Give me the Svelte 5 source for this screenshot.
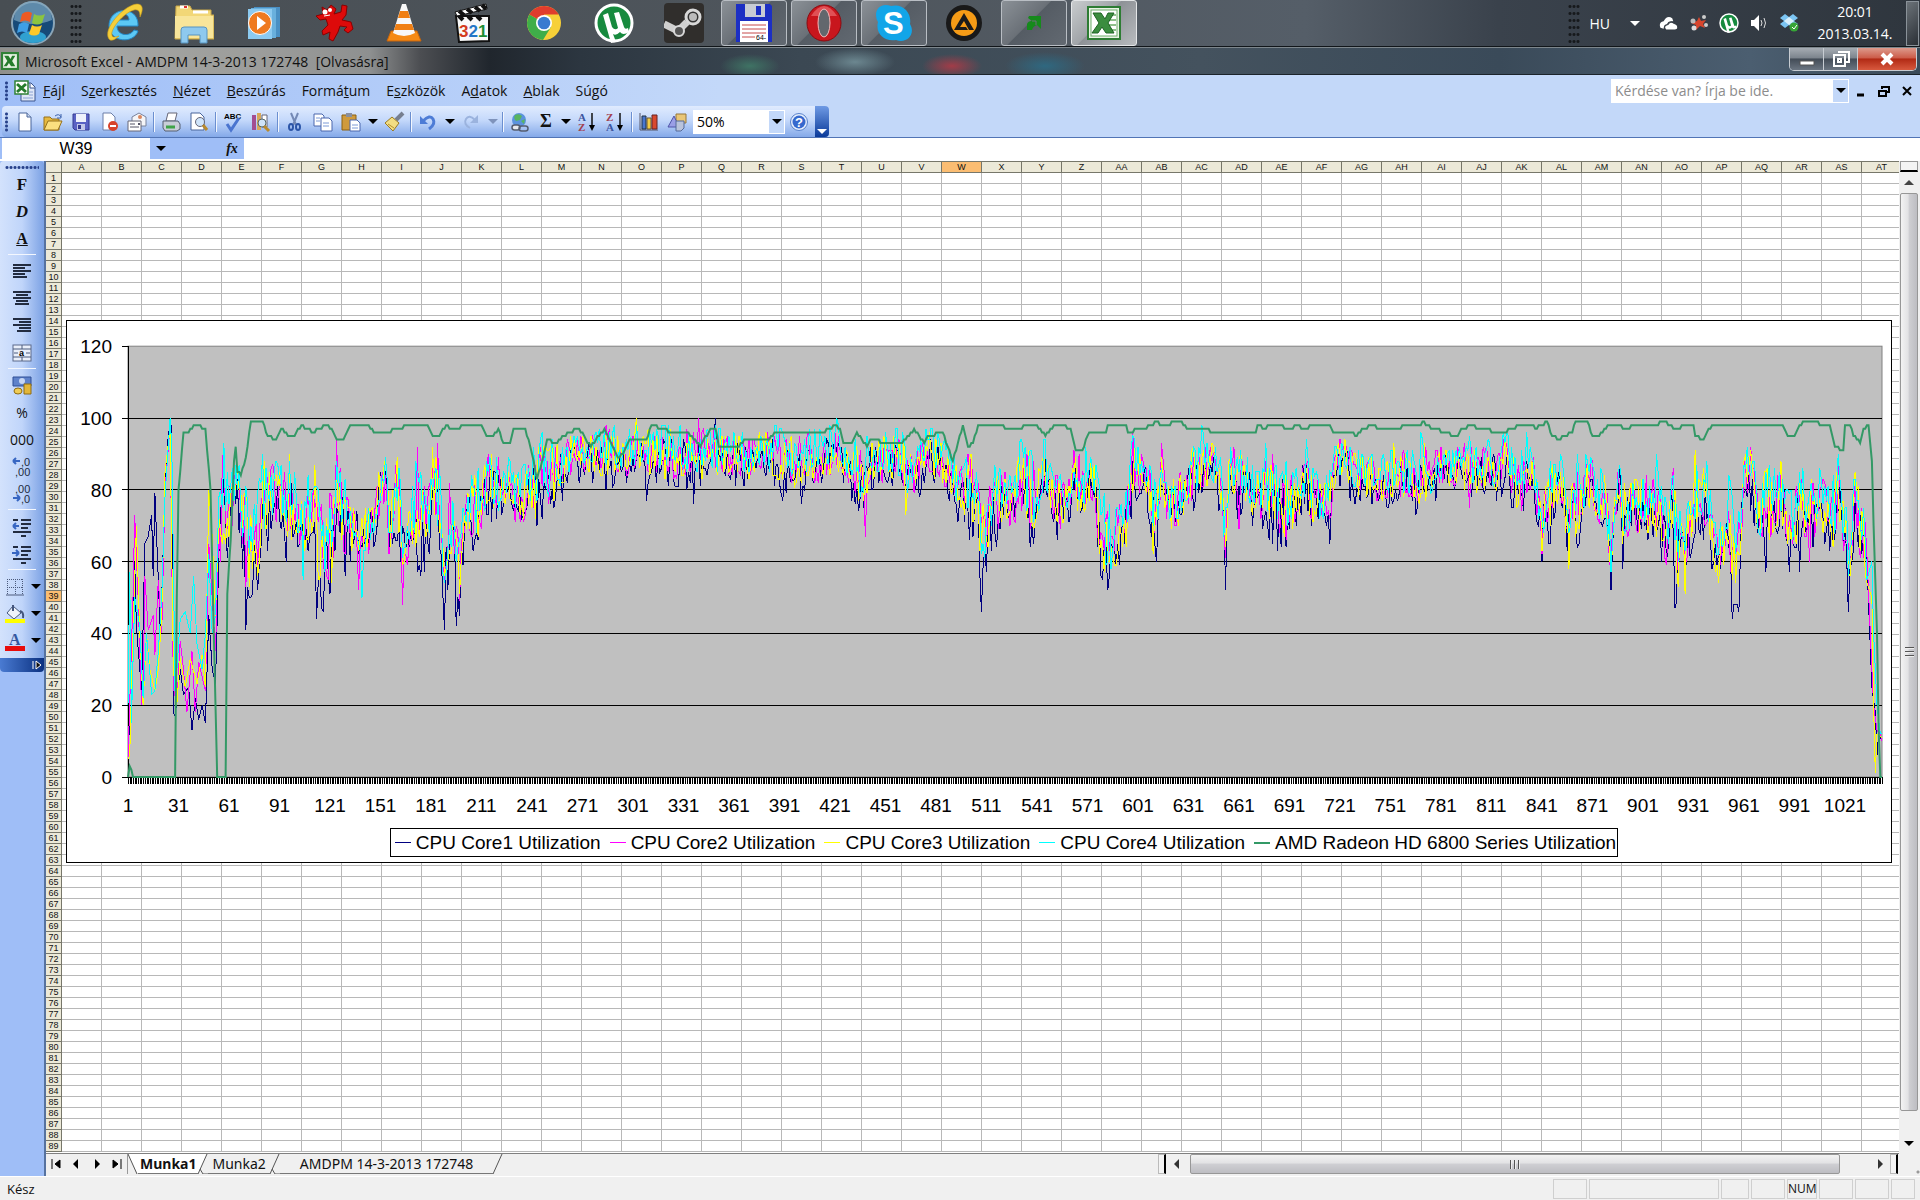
<script lang="ts">
  type Point = [number, number];

  const icons: Record<string, string> = {
    ie: '<svg viewBox="0 0 40 44" width="40" height="44"><path d="M34 25H13c0 10 13 11 17 4l4 1C30 43 6 42 5 25 5 5 35 4 34 25zM14 19h11c0-8-11-8-11 0z" fill="#5cc8f4" stroke="#2489c8"/><path d="M5 38C-2 28 20 4 33 3c8 0 5 9 3 13 0-5-1-8-6-7C19 12 6 29 8 34c0 3 4 2 7 1-3 3-8 6-10 3z" fill="#f5cf3a" stroke="#c99b1a" stroke-width=".6"/></svg>',
    folder: '<svg viewBox="0 0 40 44" width="40" height="44"><path d="M2 5h14l2 4h19v5h3v24H1z" fill="#f2d777" stroke="#c9a748"/><path d="M6 6h8M19 11h15" stroke="#fff" stroke-width="3"/><path d="M10 6h3" stroke="#d33" stroke-width="2"/><path d="M1 15h38v22H1z" fill="#f8e59a"/><path d="M7 42V29q0-3 3-3h20q3 0 3 3v13h-7v-8H14v8z" fill="#8ec9ee" stroke="#5793c0"/></svg>',
    wmp: '<svg viewBox="0 0 36 36" width="36" height="36"><path d="M8 2h26v30H8z" fill="#4a90c4"/><path d="M5 3h25v30H5z" fill="#69b0dd"/><path d="M2 4h24v30H2z" fill="#8ccaf0"/><circle cx="14" cy="18" r="11.500" fill="#ef7a1f" stroke="#fff"/><path d="M11 11l9 7-9 7z" fill="#fff"/></svg>',
    splat: '<svg viewBox="0 0 40 40" width="42" height="40"><path d="M8 4l5 3 4-5 5 4-2 5 7-2 1-7 5 1-1 9-4 5 9 2 2 7-5 4-4-3 3-3-7-1-2 6-5 9-4-2 1-7-7 3-1-4 6-6-2-6-6 1-4-4 7-2z" fill="#dd0a0a" stroke="#8b0000"/><circle cx="11" cy="9" r="2.500" fill="#fff"/><circle cx="16" cy="7" r="2" fill="#fff"/><path d="M10 13l6-1" stroke="#fff"/></svg>',
    vlc: '<svg viewBox="0 0 36 40" width="36" height="40"><path d="M5 28h26l4 10H1z" fill="#f58a15" stroke="#c9650a"/><path d="M16 1h4l9 29q-11 6-22 0z" fill="#f8f8f8"/><path d="M14 8h8l2 7H12zM10 21h16l2 6H8z" fill="#f07f13"/></svg>',
    clapper: '<svg viewBox="0 0 40 40" width="40" height="40"><path d="M2 13h33v25l-30 1z" fill="#fafafa" stroke="#111" stroke-width="2"/><path d="M1 9L32 1l1 5L3 13z" fill="#fff" stroke="#111"/><path d="M5 8l5 4M13 6l5 4M21 4l5 4M28 2l4 4M5 13l4 4M14 13l4 4M23 13l4 4" stroke="#111" stroke-width="4"/><text x="5" y="34" font-family="Liberation Sans" font-weight="bold" font-size="17"><tspan fill="#d33a1c">3</tspan><tspan fill="#2376c6">2</tspan><tspan fill="#1f8d36">1</tspan></text></svg>',
    chrome: '<svg viewBox="0 0 36 36" width="36" height="36"><circle cx="18" cy="18" r="17" fill="#f7d038"/><path d="M18 18L3.300 9.500A17 17 0 0 1 32.700 9.500H18z" fill="#e03c2d"/><path d="M18 18L3.300 9.500A17 17 0 0 0 17 35l8-13z" fill="#3fae49"/><circle cx="18" cy="18" r="8" fill="#fff"/><circle cx="18" cy="18" r="6.300" fill="#3a7bd0"/></svg>',
    utorrent: '<svg viewBox="0 0 40 40" width="40" height="40"><circle cx="20" cy="20" r="18" fill="#178a3e" stroke="#fff" stroke-width="3"/><path d="M9 12l5-2 4 14q3 4 6 1L20 10l5-1 5 15q1 3 4 1l1 4q-6 4-9 0-4 4-7 2l3 8-5 1z" fill="#fff"/></svg>',
    steam: '<svg viewBox="0 0 40 40" width="40" height="40"><rect width="40" height="40" rx="4" fill="#302e2c"/><path d="M0 21l14 7 9-9" stroke="#d0d0d0" stroke-width="7" fill="none"/><circle cx="29" cy="14" r="7" fill="#333" stroke="#d8d8d8" stroke-width="3"/><circle cx="29" cy="14" r="4" fill="#bbb"/><circle cx="15" cy="28" r="5" fill="#555" stroke="#d8d8d8" stroke-width="2"/></svg>',
    floppy: '<svg viewBox="0 0 36 38" width="36" height="38"><path d="M0 0h34l2 2v36H0z" fill="#1c2fc4"/><rect x="9" width="20" height="13" fill="#c8ccd4"/><rect x="20" y="2" width="5" height="9" fill="#1c2fc4"/><rect x="4" y="17" width="28" height="21" fill="#fff"/><path d="M6 21h24M6 25h24M6 29h24M6 33h13" stroke="#c64a4a"/><text x="20" y="36" font-size="7" font-family="Liberation Sans">64-</text></svg>',
    opera: '<svg viewBox="0 0 36 38" width="38" height="38"><ellipse cx="18" cy="19" rx="17" ry="18" fill="#c8161d" stroke="#8c0a10"/><path d="M5 12Q18-8 31 12" fill="#f0787c" opacity=".6"/><ellipse cx="18" cy="19" rx="6" ry="14" fill="#62676d" stroke="#f3b7b7"/></svg>',
    skype: '<svg viewBox="0 0 38 38" width="38" height="38"><path d="M1 11C1 2 9-1 16 2c12-3 21 7 19 18 6 10-3 20-14 16C9 38 0 29 3 18q-2-3-2-7z" fill="#12a5e8"/><text x="8" y="30" font-family="Liberation Sans" font-size="31" font-weight="bold" fill="#fff">S</text></svg>',
    aimp: '<svg viewBox="0 0 38 38" width="38" height="38"><circle cx="19" cy="19" r="18" fill="#191919"/><circle cx="19" cy="19" r="13" fill="#f59b16"/><path d="M19 9l10 17h-5l-5-9-4 6h6l2 3H9z" fill="#1b1b1b"/></svg>',
    arrow: '<svg viewBox="0 0 16 16" width="16" height="16"><path d="M3 1h12v13l-4-4q-4 1-5 5H1V9q1-3 5-3L2 3z" fill="#168a1c"/><path d="M6 6h4v4" stroke="#6a7078" fill="none"/></svg>',
    excel: '<svg viewBox="0 0 34 34" width="34" height="34"><rect x="1" y="1" width="32" height="32" fill="#e9f3e4" stroke="#2d7c33" stroke-width="2"/><rect x="4" y="4" width="26" height="26" fill="#fff" stroke="#6fae6d"/><path d="M21 9h8M21 14h8M21 19h8M21 24h8" stroke="#8fc08b" stroke-width="2"/><path d="M6 7h8l4 6 3-6h6l-6 10 6 10h-8l-4-6-4 6H5l7-10z" fill="#3b8d3f" stroke="#1e6424"/></svg>',
    book: '<svg viewBox="0 0 34 34" width="18" height="18"><rect width="34" height="34" fill="#2f8136"/><rect x="4" y="4" width="26" height="26" fill="#e8f2e4"/><path d="M6 7h8l4 6 3-6h6l-6 10 6 10h-8l-4-6-4 6H5l7-10z" fill="#257c2b"/></svg>',
    docs: '<svg viewBox="0 0 22 22" width="22" height="22"><path d="M7 3h10l4 4v14H7z" fill="#dfe7f7" stroke="#3c5690"/><path d="M16 3v5h5" fill="#fff" stroke="#3c5690"/><path d="M15 12h4M15 15h4M9 18h10" stroke="#8aa2d4"/><rect x="1" y="1" width="13" height="13" fill="#fff" stroke="#2f8136" stroke-width="1.500"/><path d="M3 4l9 8M12 4l-9 8" stroke="#257c2b" stroke-width="3"/></svg>',
    cloud: '<svg viewBox="0 0 18 14" width="20" height="15"><path d="M1 11Q-1 6 4 5q3-6 8-3l1 3q-5-1-6 3-3 0-3 4z" fill="#fff"/><path d="M6 13q-3-4 2-5 2-4 6-1 4 1 3 5l-2 1z" fill="#fff" stroke="#333a42"/></svg>',
    star: '<svg viewBox="0 0 18 18" width="18" height="18"><path d="M9 3l2 4 5-1-3 4 2 4-5-2-4 4v-5L1 9l6-2z" fill="#d8452c"/><circle cx="14" cy="3" r="2" fill="#ccc"/><circle cx="3" cy="7" r="2.500" fill="#bbb"/><circle cx="16" cy="11" r="2" fill="#ccc"/><circle cx="4" cy="14" r="2.500" fill="#ddd"/></svg>',
    speaker: '<svg viewBox="0 0 18 18" width="18" height="18"><path d="M1 6h3l5-5v16l-5-5H1z" fill="#fff"/><path d="M11 6q2 3 0 6M14 4q3 5 0 10" stroke="#ddd" fill="none"/></svg>',
    dropbox: '<svg viewBox="0 0 20 18" width="20" height="18"><path d="M1 4l5-4 4 3 4-3 5 4-4 3 4 3-5 4-4-3-4 3-5-4 4-3z" fill="#7cc5f3"/><path d="M5 7l5-4 5 4-5 4z" fill="#d9effc"/><circle cx="15" cy="13" r="4.500" fill="#36a436"/><path d="M13 13l2 2 3-4" stroke="#fff" fill="none"/></svg>',
    new: '<svg viewBox="0 0 20 20" width="20" height="20"><path d="M4 1h8l4 4v14H4z" fill="#fff" stroke="#49649a"/><path d="M12 1v4h4" fill="#cdd9ee" stroke="#49649a"/></svg>',
    open: '<svg viewBox="0 0 20 20" width="20" height="20"><path d="M1 5h6l2 2h7v11H1z" fill="#e6b93f" stroke="#96701a"/><path d="M1 18l4-9h14l-4 9z" fill="#fbdf7f" stroke="#96701a"/><path d="M12 4q4-3 6 1M18 2v4h-4" stroke="#3c62ad" fill="none"/></svg>',
    save: '<svg viewBox="0 0 20 20" width="20" height="20"><path d="M2 2h16v16H4l-2-2z" fill="#5a62c4" stroke="#343a92"/><rect x="5" y="2" width="10" height="8" fill="#eef1fb"/><rect x="6" y="12" width="8" height="6" fill="#c3c8e8"/><rect x="7" y="13" width="3" height="4" fill="#343a92"/></svg>',
    perm: '<svg viewBox="0 0 20 20" width="20" height="20"><path d="M4 1h8l4 4v13H4z" fill="#fff" stroke="#6d7fa8"/><circle cx="14" cy="14" r="5" fill="#d7432b"/><path d="M11 14h6" stroke="#fff" stroke-width="2"/></svg>',
    mail: '<svg viewBox="0 0 20 20" width="20" height="20"><path d="M5 5l7-4 7 4v9H5z" fill="#f4f5f8" stroke="#78829c"/><circle cx="13" cy="5" r="2" fill="#d9875f"/><path d="M1 9h13v10H1z" fill="#fff" stroke="#667"/><path d="M3 12h5M3 15h9" stroke="#556"/><path d="M11 11h2v2h-2z" fill="#556"/></svg>',
    print: '<svg viewBox="0 0 20 20" width="20" height="20"><path d="M7 1h9l-2 8H5z" fill="#fff" stroke="#667"/><path d="M2 9h15l2 3v5l-3 2H4l-2-3z" fill="#c9ced8" stroke="#555f70"/><path d="M5 15h9" stroke="#3fa347" stroke-width="3"/></svg>',
    preview: '<svg viewBox="0 0 20 20" width="20" height="20"><path d="M2 1h9l4 4v13H2z" fill="#fff" stroke="#49649a"/><circle cx="11" cy="10" r="4.500" fill="#cfe4fa" stroke="#667"/><path d="M14 13l4 5" stroke="#b88a2e" stroke-width="3"/></svg>',
    spell: '<svg viewBox="0 0 20 20" width="20" height="20"><text x="1" y="7" font-size="8" font-family="Liberation Sans" font-weight="bold">ABC</text><path d="M4 12l4 6 8-12" stroke="#4a74cf" stroke-width="3" fill="none"/></svg>',
    research: '<svg viewBox="0 0 20 20" width="20" height="20"><path d="M1 3h4v15H1z" fill="#a24e93"/><path d="M6 1h4v17H6z" fill="#d8a85a"/><path d="M11 3h5v12h-5z" fill="#fff" stroke="#667"/><circle cx="11" cy="11" r="4" fill="#cfe4fa" stroke="#566"/><path d="M13 14l5 5" stroke="#b88a2e" stroke-width="3"/></svg>',
    cut: '<svg viewBox="0 0 20 20" width="20" height="20"><path d="M6 1l5 12M13 1L8 13" stroke="#7489b5" stroke-width="2"/><ellipse cx="6" cy="15" rx="2" ry="3" fill="none" stroke="#2c55a8" stroke-width="2"/><ellipse cx="13" cy="15" rx="2" ry="3" fill="none" stroke="#2c55a8" stroke-width="2"/></svg>',
    copy: '<svg viewBox="0 0 20 20" width="20" height="20"><path d="M1 2h8l2 2v10H1z" fill="#fff" stroke="#4a67ad"/><path d="M8 6h8l3 3v10H8z" fill="#fff" stroke="#4a67ad"/><path d="M3 6h4M3 9h4M10 11h6M10 14h6" stroke="#7d9ad6"/></svg>',
    paste: '<svg viewBox="0 0 20 20" width="20" height="20"><path d="M1 3h14v15H1z" fill="#cf9a3c" stroke="#8a6013"/><rect x="5" y="1" width="6" height="4" fill="#8a8f9c"/><path d="M9 8h7l3 3v8H9z" fill="#fff" stroke="#4a67ad"/><path d="M11 13h6M11 16h6" stroke="#7d9ad6"/></svg>',
    brush: '<svg viewBox="0 0 20 20" width="20" height="20"><path d="M19 1l-7 7" stroke="#777f90" stroke-width="4"/><path d="M8 5l7 6-6 8-8-8z" fill="#f2dd83" stroke="#9a7a22"/><path d="M4 12l6 4" stroke="#b5902f"/></svg>',
    undo: '<svg viewBox="0 0 20 20" width="20" height="20"><path d="M5 9q7-7 10-2t-4 10" stroke="#4d7cd6" stroke-width="3" fill="none"/><path d="M2 4v8h8z" fill="#4d7cd6"/></svg>',
    redo: '<svg viewBox="0 0 20 20" width="20" height="20"><path d="M14 8Q8 2 5 7t4 9" stroke="#9bb3de" stroke-width="2" fill="none"/><path d="M17 3v8H9z" fill="#9bb3de"/></svg>',
    link: '<svg viewBox="0 0 20 20" width="20" height="20"><circle cx="9" cy="8" r="7" fill="#5b93dd"/><path d="M5 3q4-2 7 1l-2 4-4 1q-3-3-1-6zM11 9l4-2-1 5z" fill="#59b55f"/><rect x="2" y="13" width="8" height="5" rx="2.500" fill="#e6e9ef" stroke="#555d70" stroke-width="1.500"/><rect x="9" y="14" width="9" height="5" rx="2.500" fill="none" stroke="#555d70" stroke-width="1.500"/></svg>',
    sortaz: '<svg viewBox="0 0 20 20" width="20" height="20"><text x="1" y="9" font-size="11" font-family="Liberation Serif" font-weight="bold" fill="#3c559f">A</text><text x="1" y="19" font-size="11" font-family="Liberation Serif" font-weight="bold" fill="#a1404f">Z</text><path d="M15 1v15" stroke="#111" stroke-width="1.500"/><path d="M12 13h6l-3 6z"/></svg>',
    sortza: '<svg viewBox="0 0 20 20" width="20" height="20"><text x="1" y="9" font-size="11" font-family="Liberation Serif" font-weight="bold" fill="#a1404f">Z</text><text x="1" y="19" font-size="11" font-family="Liberation Serif" font-weight="bold" fill="#3c559f">A</text><path d="M15 1v15" stroke="#111" stroke-width="1.500"/><path d="M12 13h6l-3 6z"/></svg>',
    chart: '<svg viewBox="0 0 20 20" width="20" height="20"><path d="M1 1v17h18" stroke="#556" fill="none"/><path d="M3 4h4v13H3z" fill="#4776d0" stroke="#234"/><path d="M8 6h4v11H8z" fill="#f3cc45" stroke="#653"/><path d="M13 3h5v14h-5z" fill="#d9482e" stroke="#622"/></svg>',
    draw: '<svg viewBox="0 0 20 20" width="20" height="20"><path d="M9 2h10v9H9z" fill="#e9c676" stroke="#96773a"/><path d="M1 15l6-11 5 11z" fill="#9a9ee6" stroke="#4f54a8"/><path d="M9 9h8v7l-3 3H9z" fill="#b9c3db" stroke="#556a99"/></svg>',
    help: '<svg viewBox="0 0 20 20" width="20" height="20"><circle cx="10" cy="10" r="8.500" fill="#e5eefc" stroke="#5a83cc"/><circle cx="10" cy="10" r="6.500" fill="#3568cd"/><text x="6" y="15" font-size="13" font-family="Liberation Sans" font-weight="bold" fill="#fff">?</text></svg>',
    left: '<svg viewBox="0 0 18 16" width="18" height="16"><path d="M0 1h18M0 4h12M0 7h18M0 10h12M0 13h14" stroke="#222c40" stroke-width="2"/></svg>',
    center: '<svg viewBox="0 0 18 16" width="18" height="16"><path d="M0 1h18M3 4h12M0 7h18M3 10h12M2 13h14" stroke="#222c40" stroke-width="2"/></svg>',
    right: '<svg viewBox="0 0 18 16" width="18" height="16"><path d="M0 1h18M6 4h12M0 7h18M6 10h12M4 13h14" stroke="#222c40" stroke-width="2"/></svg>',
    merge: '<svg viewBox="0 0 20 18" width="20" height="18"><rect x="1" y="1" width="18" height="16" fill="#e9effa" stroke="#5c6b8c"/><path d="M1 5h18M1 13h18M10 1v4M10 13v4M2 9h4M14 9h4" stroke="#4d5c7e"/><text x="7" y="12" font-size="9" font-weight="bold" font-family="Liberation Sans">a</text></svg>',
    money: '<svg viewBox="0 0 20 20" width="20" height="20"><path d="M1 1h18v9H1z" fill="#5f82ca" stroke="#2e4f96"/><circle cx="10" cy="5" r="3" fill="#c6d6f3"/><path d="M12 8h7v10h-7z" fill="#e3b638" stroke="#8f6c12"/><ellipse cx="6" cy="15" rx="4" ry="3" fill="#f0cc55" stroke="#8f6c12"/></svg>',
    incdec: '<svg viewBox="0 0 20 20" width="20" height="20"><path d="M1 4h7M1 4l3-3M1 4l3 3" stroke="#3766c2" stroke-width="2"/><text x="9" y="9" font-size="11" font-family="Liberation Sans" fill="#222c40">,0</text><text x="3" y="19" font-size="11" font-family="Liberation Sans" fill="#222c40">,00</text></svg>',
    decdec: '<svg viewBox="0 0 20 20" width="20" height="20"><path d="M1 14h7M8 14l-3-3M8 14l-3 3" stroke="#3766c2" stroke-width="2"/><text x="3" y="9" font-size="11" font-family="Liberation Sans" fill="#222c40">,00</text><text x="9" y="19" font-size="11" font-family="Liberation Sans" fill="#222c40">,0</text></svg>',
    outdent: '<svg viewBox="0 0 20 20" width="20" height="20"><path d="M1 3h5M9 3h10M9 7h10M9 11h7M1 15h18M9 19h5" stroke="#222c40" stroke-width="2"/><path d="M7 9H1M1 9l3-3M1 9l3 3" stroke="#3766c2" stroke-width="2"/></svg>',
    indent: '<svg viewBox="0 0 20 20" width="20" height="20"><path d="M1 3h5M9 3h10M9 7h10M9 11h7M1 15h18M9 19h5" stroke="#222c40" stroke-width="2"/><path d="M0 9h7M7 9L4 6M7 9l-3 3" stroke="#3766c2" stroke-width="2"/></svg>',
    borders: '<svg viewBox="0 0 18 18" width="18" height="18"><path d="M1 1.500h16M1 9.500h16M1.500 1v16M9.500 1v16M16.500 1v16" stroke="#4c5b7c" stroke-dasharray="1 1"/><path d="M0 17h18" stroke="#4c5b7c"/></svg>',
    fill: '<svg viewBox="0 0 20 20" width="20" height="20"><path d="M8 2l8 7-7 6-7-6z" fill="#eef3fb" stroke="#44567d"/><path d="M8 7V1M15 7q4 1 3 7" stroke="#44567d" stroke-width="2" fill="none"/><path d="M0 15h20v4H0z" fill="#ff0"/></svg>',
    color: '<svg viewBox="0 0 20 20" width="20" height="20"><text x="4" y="14" font-size="16" font-weight="bold" font-family="Liberation Serif" fill="#34589f">A</text><path d="M0 15h20v5H0z" fill="#e80c0c"/></svg>'
  };

  const taskbar = [
    { icon: 'ie', label: 'Internet Explorer' },
    { icon: 'folder', label: 'Intéző' },
    { icon: 'wmp', label: 'Media Player' },
    { icon: 'splat', label: 'IrfanView' },
    { icon: 'vlc', label: 'VLC' },
    { icon: 'clapper', label: 'Media Player Classic' },
    { icon: 'chrome', label: 'Chrome' },
    { icon: 'utorrent', label: 'µTorrent' },
    { icon: 'steam', label: 'Steam' },
    { icon: 'floppy', label: 'Total Commander', open: true },
    { icon: 'opera', label: 'Opera', open: true },
    { icon: 'skype', label: 'Skype', open: true },
    { icon: 'aimp', label: 'AIMP' },
    { icon: 'arrow', label: 'AMD', open: true },
    { icon: 'excel', label: 'Excel', open: true, active: true }
  ];
  const tray = ['cloud', 'star', 'utorrent', 'speaker', 'dropbox'];

  // [before, accelerator, after]
  const menus = [
    ['', 'F', 'ájl'],
    ['S', 'z', 'erkesztés'],
    ['', 'N', 'ézet'],
    ['', 'B', 'eszúrás'],
    ['Formá', 't', 'um'],
    ['E', 's', 'zközök'],
    ['A', 'd', 'atok'],
    ['', 'A', 'blak'],
    ['Sú', 'g', 'ó']
  ];

  const tools = [
    'new', 'open', 'save', 'perm', 'mail', '|', 'print', 'preview', '|', 'spell', 'research', '|',
    'cut', 'copy', 'paste', 'v', 'brush', '|', 'undo', 'v', 'redo', 'v-', '|', 'link', 'sigma', 'v',
    'sortaz', 'sortza', '|', 'chart', 'draw'
  ];
  const sideTools = [
    'F', 'D', 'A', '|', 'left', 'center', 'right', 'merge', '|', 'money', '%', '000', 'incdec', 'decdec',
    '|', 'outdent', 'indent', '|', 'borders', 'fill', 'color'
  ];

  const columns = Array.from({ length: 46 }, (_, i) =>
    i < 26 ? String.fromCharCode(65 + i) : 'A' + String.fromCharCode(39 + i)
  );
  const rows = Array.from({ length: 89 }, (_, i) => i + 1);

  // chart
  const samples = 1042;
  const left = 61;
  const bottom = 456;
  const stepX = 1754 / samples;
  const stepY = 3.59;
  const x = (i: number) => left + i * stepX;
  const y = (v: number) => bottom - v * stepY;

  const gpu: Point[] = [
    [0, 0], [1, 3], [3, 0], [28, 0], [29, 50], [30, 80], [33, 96], [36, 96], [40, 98], [46, 97], [49, 80],
    [51, 40], [53, 0], [58, 0], [59, 51], [61, 66], [63, 88], [64, 92], [65, 85], [67, 84], [70, 89], [73, 99],
    [80, 99], [83, 95], [88, 94], [91, 97], [95, 95], [99, 95], [103, 98], [110, 96], [118, 98], [121, 97],
    [124, 94], [128, 94], [132, 98], [142, 98], [146, 96], [156, 96], [158, 97], [163, 97], [165, 98], [178, 98],
    [181, 95], [185, 95], [189, 98], [192, 97], [197, 97], [199, 98], [210, 98], [213, 95], [217, 95], [220, 97],
    [223, 93], [227, 93], [229, 97], [236, 97], [240, 90], [243, 83], [246, 88], [249, 94], [254, 93], [262, 96],
    [268, 97], [275, 92], [283, 97], [291, 89], [294, 90], [298, 94], [308, 94], [311, 98], [324, 96], [332, 96],
    [340, 92], [346, 97], [349, 97], [351, 92], [363, 92], [367, 94], [381, 94], [385, 96], [413, 96], [420, 98],
    [423, 97], [425, 93], [430, 93], [433, 96], [439, 92], [441, 94], [451, 93], [460, 93], [467, 97], [473, 93],
    [475, 95], [484, 96], [490, 88], [496, 98], [499, 92], [502, 93], [505, 98], [520, 98], [521, 97], [530, 97],
    [534, 98], [540, 98], [545, 95], [550, 98], [554, 98], [560, 97], [563, 91], [567, 91], [571, 96], [581, 96],
    [582, 98], [593, 98], [594, 96], [602, 97], [609, 98], [611, 99], [613, 98], [619, 98], [620, 99], [625, 99],
    [629, 97], [641, 97], [644, 96], [670, 96], [671, 98], [675, 97], [679, 98], [686, 98], [687, 97], [692, 97],
    [694, 98], [698, 97], [705, 98], [714, 98], [716, 96], [726, 96], [730, 95], [734, 97], [740, 98], [742, 97],
    [755, 97], [758, 98], [768, 98], [769, 99], [775, 97], [784, 96], [786, 95], [790, 95], [792, 97], [799, 98],
    [801, 97], [817, 96], [827, 98], [834, 98], [836, 97], [843, 99], [846, 95], [850, 94], [858, 96], [860, 99],
    [867, 99], [870, 95], [874, 95], [877, 97], [880, 98], [887, 98], [888, 97], [892, 97], [894, 98], [909, 98],
    [910, 99], [914, 99], [915, 98], [919, 97], [926, 98], [930, 98], [931, 95], [936, 94], [939, 97], [942, 98],
    [982, 98], [984, 97], [986, 95], [990, 95], [993, 98], [997, 99], [1011, 98], [1014, 92], [1019, 91],
    [1020, 98], [1023, 98], [1025, 95], [1029, 93], [1031, 97], [1034, 98], [1036, 88], [1037, 70], [1038, 55],
    [1039, 40], [1040, 14], [1041, 0], [1042, 0]
  ];

  // sample, lowest and highest core load around it
  const band: [number, number, number][] = [
    [54, 50, 80], [57, 66, 93], [60, 62, 85], [64, 78, 92], [67, 68, 85], [70, 48, 80], [74, 55, 76], [77, 56, 78],
    [80, 65, 90], [85, 68, 87], [90, 72, 87], [95, 64, 85], [97, 66, 90], [100, 66, 80], [104, 62, 78],
    [110, 70, 87], [113, 52, 78], [117, 52, 76], [121, 56, 82], [125, 70, 90], [129, 60, 82], [135, 64, 82],
    [138, 54, 72], [142, 62, 80], [146, 64, 78], [150, 74, 88], [153, 76, 91], [155, 62, 80], [160, 70, 90],
    [164, 54, 72], [168, 64, 82], [172, 62, 88], [178, 60, 78], [181, 74, 92], [184, 66, 90], [187, 52, 72],
    [190, 50, 70], [193, 65, 80], [197, 47, 68], [200, 66, 78], [205, 65, 85], [210, 67, 84], [214, 76, 91],
    [220, 71, 90], [226, 76, 88], [232, 68, 84], [238, 74, 88], [242, 72, 92], [247, 77, 94], [252, 75, 93],
    [258, 80, 93], [265, 84, 96], [275, 84, 96], [285, 83, 97], [295, 84, 96], [310, 84, 97], [335, 83, 97],
    [345, 84, 98], [355, 83, 96], [366, 83, 96], [375, 85, 97], [385, 82, 97], [400, 81, 96], [410, 82, 96],
    [420, 85, 98], [430, 80, 94], [437, 74, 92], [442, 82, 96], [452, 83, 96], [460, 82, 95], [463, 76, 90],
    [468, 79, 92], [475, 84, 97], [482, 83, 96], [490, 78, 90], [494, 72, 86], [500, 71, 92], [504, 70, 88],
    [507, 55, 75], [510, 60, 80], [514, 66, 85], [520, 70, 88], [526, 66, 84], [530, 76, 92], [537, 67, 91],
    [540, 68, 88], [545, 78, 94], [549, 68, 86], [557, 70, 84], [561, 77, 92], [567, 72, 90], [572, 77, 92],
    [575, 74, 88], [577, 60, 80], [582, 54, 75], [586, 57, 74], [592, 60, 80], [597, 79, 94], [603, 78, 91],
    [607, 70, 86], [611, 63, 80], [614, 76, 91], [618, 70, 84], [623, 68, 84], [629, 75, 92], [635, 77, 93],
    [640, 81, 96], [645, 79, 93], [649, 74, 88], [652, 56, 78], [655, 78, 93], [660, 73, 92], [664, 76, 90],
    [670, 70, 84], [675, 73, 90], [682, 67, 91], [688, 66, 88], [693, 69, 90], [700, 75, 91], [706, 69, 84],
    [712, 71, 86], [714, 69, 84], [718, 81, 94], [723, 81, 95], [728, 78, 92], [738, 78, 90], [745, 76, 88],
    [752, 77, 92], [760, 77, 91], [765, 75, 90], [770, 77, 95], [774, 77, 90], [780, 81, 92], [790, 81, 93],
    [798, 79, 93], [806, 79, 93], [815, 80, 93], [818, 82, 95], [826, 72, 88], [832, 79, 93], [836, 77, 90],
    [840, 62, 78], [845, 68, 88], [851, 79, 89], [856, 60, 80], [861, 68, 89], [868, 74, 91], [873, 70, 84],
    [877, 71, 85], [881, 55, 74], [886, 77, 89], [888, 64, 82], [894, 68, 85], [901, 65, 84], [906, 70, 88],
    [910, 64, 83], [914, 59, 76], [918, 70, 88], [920, 53, 76], [925, 55, 72], [930, 68, 84], [933, 71, 90],
    [938, 67, 86], [943, 53, 70], [948, 51, 70], [950, 65, 84], [953, 51, 78], [957, 52, 74], [960, 77, 90],
    [964, 77, 92], [969, 65, 80], [973, 64, 88], [978, 68, 84], [982, 70, 88], [987, 64, 80], [993, 65, 83],
    [997, 67, 86], [1000, 67, 85], [1008, 67, 84], [1014, 64, 82], [1016, 74, 89], [1020, 60, 76], [1022, 52, 72],
    [1026, 69, 89], [1030, 57, 76], [1033, 52, 72]
  ];

  const cores = [
    {
      name: 'CPU Core1 Utilization', color: '#000080', bias: -0.22,
      start: [[0, 8], [2, 20], [4, 60], [5, 42], [8, 24], [9, 42], [10, 65], [12, 67], [14, 73], [15, 56], [16, 79], [18, 55], [19, 42], [20, 50], [22, 80], [24, 96], [26, 98], [27, 18], [28, 17], [31, 30], [33, 23], [36, 25], [38, 13], [40, 22], [42, 16], [44, 20], [46, 15], [48, 45], [50, 30], [52, 26]],
      spikes: [[70, 41], [77, 52], [94, 60], [112, 44], [116, 46], [120, 51], [129, 56], [188, 41], [195, 42], [308, 77], [336, 76], [389, 77], [400, 76], [507, 46], [582, 52], [652, 52], [611, 60], [683, 63], [714, 65], [840, 60], [881, 52], [888, 58], [919, 47], [953, 44], [957, 46], [973, 57], [987, 57], [993, 57], [1022, 46], [349, 100], [536, 64]],
      end: [[1036, 25], [1038, 18], [1039, 6], [1040, 12], [1042, 10]]
    },
    {
      name: 'CPU Core2 Utilization', color: '#ff00ff', bias: -0.02,
      start: [[0, 5], [3, 50], [4, 73], [6, 50], [8, 20], [9, 22], [10, 56], [12, 41], [15, 45], [16, 34], [18, 55], [20, 40], [22, 80], [25, 98], [27, 25], [29, 20], [31, 38], [33, 30], [35, 18], [38, 35], [40, 18], [42, 32], [46, 24], [48, 65], [50, 50], [52, 35]],
      spikes: [[124, 94], [137, 52], [163, 48], [172, 92], [184, 93], [191, 82], [339, 100], [438, 67], [597, 96], [614, 93], [660, 69], [797, 75], [964, 92], [999, 60], [284, 98]],
      end: [[1036, 30], [1037, 20], [1039, 13], [1041, 12], [1042, 10]]
    },
    {
      name: 'CPU Core3 Utilization', color: '#ffff00', bias: -0.02,
      start: [[0, 5], [1, 6], [3, 40], [5, 70], [7, 40], [9, 20], [11, 40], [13, 30], [16, 24], [18, 30], [20, 45], [22, 85], [25, 97], [27, 30], [29, 20], [31, 33], [34, 25], [37, 33], [41, 26], [44, 34], [46, 25], [48, 80], [50, 67], [52, 45]],
      spikes: [[96, 90], [111, 87], [121, 54], [181, 92], [302, 100], [462, 73], [609, 62], [931, 91], [856, 58], [982, 88], [752, 93], [925, 51]],
      end: [[1036, 50], [1037, 20], [1038, 1], [1039, 12], [1042, 11]]
    },
    {
      name: 'CPU Core4 Utilization', color: '#00ffff', bias: 0.12,
      start: [[0, 20], [1, 57], [2, 15], [4, 50], [7, 42], [9, 22], [11, 40], [14, 23], [16, 24], [18, 35], [20, 50], [22, 78], [25, 100], [26, 92], [27, 60], [28, 22], [31, 44], [34, 46], [37, 40], [39, 56], [41, 37], [44, 30], [46, 40], [48, 62], [50, 40], [52, 45]],
      spikes: [[57, 93], [80, 90], [104, 55], [139, 50], [421, 100], [638, 98], [768, 96], [831, 96], [908, 90], [1016, 90], [700, 94], [676, 93]],
      end: [[1036, 60], [1037, 40], [1039, 20], [1041, 12], [1042, 12]]
    }
  ];

  const legend = [...cores, { name: 'AMD Radeon HD 6800 Series Utilization', color: '#339966' }];

  function random(seed: number) {
    return () => {
      seed = (seed * 1664525 + 1013904223) % 4294967296;
      return seed / 4294967296;
    };
  }

  function line(points: number[][]) {
    return points.map(([i, v]) => `${x(i).toFixed(1)},${y(v).toFixed(1)}`).join(' ');
  }

  // the GPU load is logged in whole percents
  function gpuLine() {
    const points: number[][] = [];
    for (let k = 0; k < gpu.length - 1; k++) {
      const [i0, v0] = gpu[k];
      const [i1, v1] = gpu[k + 1];
      for (let i = i0; i < i1; i++) {
        points.push([i, Math.round(v0 + ((v1 - v0) * (i - i0)) / (i1 - i0))]);
      }
    }
    return line([...points, gpu[gpu.length - 1]]);
  }

  function coreLine(core: (typeof cores)[0], index: number) {
    const rand = random(977 + index * 7919);
    const points = [...core.start];
    let b = 0;
    for (let i = 54; i < 1034; i++) {
      while (b < band.length - 2 && band[b + 1][0] <= i) b++;
      const [i0, lo0, hi0] = band[b];
      const [i1, lo1, hi1] = band[b + 1];
      const t = Math.min(1, (i - i0) / (i1 - i0));
      const lo = lo0 + (lo1 - lo0) * t;
      const hi = hi0 + (hi1 - hi0) * t;
      const spike = core.spikes.find((s) => s[0] === i);
      points.push([i, spike ? spike[1] : Math.min(98, Math.round(lo + (hi - lo) * (core.bias + rand())))]);
    }
    return line([...points, ...core.end]);
  }

  const ticks = Array.from({ length: samples + 1 }, (_, i) => `M${Math.round(x(i))} ${bottom}v7`).join('');
  const labels = Array.from({ length: 35 }, (_, i) => i * 30 + 1);
  const levels = [0, 20, 40, 60, 80, 100, 120];

  let zoom = $state('50%');
  let question = $state('');
</script>

<div class="screen">
  <header class="taskbar">
    <button class="start" aria-label="Start">
      <svg viewBox="0 0 46 46" width="46" height="46">
        <circle cx="23" cy="23" r="21" fill="#174a78" stroke="#8ba6b8" stroke-width="2" />
        <path d="M4 20a19 19 0 0 1 38 0q-19 8-38 0z" fill="#7da5bf" opacity=".7" />
        <ellipse cx="23" cy="37" rx="13" ry="6" fill="#37b6e6" opacity=".8" />
        <path d="M12 14q5-4 10-1l-2 9q-5-3-10 0z" fill="#ee5a24" />
        <path d="M24 14q5 3 11 0l-3 9q-5 3-10 0z" fill="#8cc540" />
        <path d="M9 24q5-3 10 0l-2 9q-5-3-10 0z" fill="#3f9fe6" />
        <path d="M22 25q5 3 10 0l-3 9q-5 3-10 0z" fill="#fcc92c" />
      </svg>
    </button>
    <span class="grip"></span>
    <nav class="apps">
      {#each taskbar as app}
        <button class="app" class:open={app.open} class:active={app.active} aria-label={app.label}>
          {@html icons[app.icon]}
        </button>
      {/each}
    </nav>
    <span class="grip"></span>
    <span class="lang">HU</span>
    <span class="caret light"></span>
    <div class="tray">
      {#each tray as name}
        <span class="tray-icon">{@html icons[name]}</span>
      {/each}
    </div>
    <div class="clock"><span>20:01</span><span>2013.03.14.</span></div>
    <button class="desktop" aria-label="Asztal megjelenítése"></button>
  </header>

  <div class="titlebar">
    {@html icons.book}
    <span class="title">Microsoft Excel - AMDPM 14-3-2013 172748&nbsp; [Olvasásra]</span>
    <div class="window-buttons">
      <button class="win" aria-label="Kis méret">
        <svg viewBox="0 0 18 16" width="18" height="16"><path d="M2 10h14v4H2z" fill="#fff" stroke="#555" /></svg>
      </button>
      <button class="win" aria-label="Előző méret">
        <svg viewBox="0 0 18 16" width="18" height="16"><path d="M6 1h11v10h-3M2 4h11v11H2zM6 8h3v3H6z" fill="none" stroke="#fff" stroke-width="2" /></svg>
      </button>
      <button class="win close" aria-label="Bezárás">
        <svg viewBox="0 0 18 16" width="18" height="16"><path d="M4 3l10 10M14 3L4 13" stroke="#fff" stroke-width="4" /></svg>
      </button>
    </div>
  </div>

  <div class="menubar">
    <span class="dots"></span>
    {@html icons.docs}
    <nav class="menus">
      {#each menus as [before, key, after]}
        <button>{before}<u>{key}</u>{after}</button>
      {/each}
    </nav>
    <div class="combo ask">
      <input aria-label="Kérdés" placeholder="Kérdése van? Írja be ide." bind:value={question} />
      <button class="drop" aria-label="Korábbi kérdések"><span class="caret"></span></button>
    </div>
    <div class="doc-buttons">
      <button aria-label="Munkafüzet kis mérete"><svg viewBox="0 0 12 12" width="12" height="12"><path d="M2 10h7" stroke="#000" stroke-width="3" /></svg></button>
      <button aria-label="Munkafüzet előző mérete"><svg viewBox="0 0 12 12" width="12" height="12"><path d="M4 4V2h7v5H8M1 6h7v5H1z" fill="none" stroke="#000" stroke-width="2" /></svg></button>
      <button aria-label="Munkafüzet bezárása"><svg viewBox="0 0 12 12" width="12" height="12"><path d="M2 2l8 8M10 2l-8 8" stroke="#000" stroke-width="2" /></svg></button>
    </div>
  </div>

  <div class="toolrow">
    <div class="toolbar">
      <span class="dots"></span>
      {#each tools as tool}
        {#if tool === '|'}
          <span class="sep"></span>
        {:else if tool === 'v' || tool === 'v-'}
          <button class="more" aria-label="Továbbiak"><span class="caret" class:dim={tool === 'v-'}></span></button>
        {:else if tool === 'sigma'}
          <button class="tool sigma">Σ</button>
        {:else}
          <button class="tool" aria-label={tool}>{@html icons[tool]}</button>
        {/if}
      {/each}
      <div class="combo zoom">
        <input aria-label="Nagyítás" bind:value={zoom} />
        <button class="drop" aria-label="Nagyítás választása"><span class="caret"></span></button>
      </div>
      <button class="tool" aria-label="Súgó">{@html icons.help}</button>
      <button class="cap" aria-label="Eszköztár beállításai"><span class="caret light"></span></button>
    </div>
  </div>

  <div class="formula">
    <input class="name" aria-label="Név mező" value="W39" />
    <button class="name-drop" aria-label="Nevek"><span class="caret"></span></button>
    <button class="fx">fx</button>
    <input class="cell-value" aria-label="Szerkesztőléc" />
  </div>

  <main>
    <aside>
      <div class="side">
        <span class="dots-h"></span>
        {#each sideTools as tool, i}
          {#if tool === '|'}
            <span class="sep-h"></span>
          {:else}
            <div class="side-row">
              <button class="tool side-{i}" aria-label={tool}>
                {#if icons[tool]}{@html icons[tool]}{:else}{tool}{/if}
              </button>
              {#if i > 17}<button class="more" aria-label="Továbbiak"><span class="caret"></span></button>{/if}
            </div>
          {/if}
        {/each}
        <button class="cap-h" aria-label="Eszköztár beállításai">
          <svg viewBox="0 0 10 10" width="10" height="10"><path d="M1 1v8M4 1l5 4-5 4z" stroke="#fff" fill="#111" /></svg>
        </button>
      </div>
    </aside>

    <section class="book">
      <div class="view">
        <div class="sheet">
          <table>
            <thead>
              <tr>
                <th class="corner"></th>
                {#each columns as column}
                  <th class:selected={column === 'W'}>{column}</th>
                {/each}
              </tr>
            </thead>
            <tbody>
              {#each rows as row}
                <tr>
                  <th class:selected={row === 39}>{row}</th>
                  {#each columns as _}<td></td>{/each}
                </tr>
              {/each}
            </tbody>
          </table>

          <figure class="chart">
            <svg viewBox="0 0 1824 499" role="img" aria-label="Kihasználtság">
              <rect x={left} y={y(120)} width="1754" height={120 * stepY} fill="#c0c0c0" stroke="#808080" />
              <g shape-rendering="crispEdges">
                {#each levels as level}
                  {#if level < 120}
                    <path d="M{left} {y(level)}h1754" stroke="#000" />
                  {/if}
                  <path d="M{left - 6} {y(level)}h6" stroke="#000" />
                {/each}
                <path d="M{left} {y(120)}V{bottom}" stroke="#000" />
                <path d={ticks} stroke="#000" />
                {#each cores as core, i}
                  <polyline points={coreLine(core, i)} fill="none" stroke={core.color} />
                {/each}
              </g>
              <polyline points={gpuLine()} fill="none" stroke="#339966" stroke-width="2" />
              {#each levels as level}
                <text x={left - 16} y={y(level) + 7} text-anchor="end">{level}</text>
              {/each}
              {#each labels as label}
                <text x={x(label - 1)} y="491" text-anchor="middle">{label}</text>
              {/each}
            </svg>
            <figcaption>
              <ul>
                {#each legend as item}
                  <li><span class="key" style="background: {item.color}"></span>{item.name}</li>
                {/each}
              </ul>
            </figcaption>
          </figure>
        </div>

        <div class="vscroll">
          <span class="split"></span>
          <button aria-label="Fel"><span class="caret up"></span></button>
          <div class="thumb"><span></span></div>
          <button aria-label="Le"><span class="caret"></span></button>
        </div>
      </div>

      <div class="tabs">
        <div class="tab-nav">
          <button aria-label="Első">
            <svg viewBox="0 0 10 12" width="10" height="12"><path d="M1 1v10M9 2L4 6l5 4z" stroke="#000" /></svg>
          </button>
          <button aria-label="Előző">
            <svg viewBox="0 0 10 12" width="10" height="12"><path d="M7 1L2 6l5 5z" /></svg>
          </button>
          <button aria-label="Következő">
            <svg viewBox="0 0 10 12" width="10" height="12"><path d="M3 1l5 5-5 5z" /></svg>
          </button>
          <button aria-label="Utolsó">
            <svg viewBox="0 0 10 12" width="10" height="12"><path d="M9 1v10M1 2l5 4-5 4z" stroke="#000" /></svg>
          </button>
        </div>
        <svg class="slant" viewBox="0 0 10 20" width="10" height="20"><path d="M0 0h10v20z" fill="#fff" /><path d="M0 0l9 20" stroke="#555" fill="none" /></svg>
        <button class="tab current">Munka1</button>
        <svg class="slant" viewBox="0 0 10 20" width="10" height="20"><path d="M0 0h9L0 20z" fill="#fff" /><path d="M9 0L0 20M2 15l3 5h5" stroke="#555" fill="none" /></svg>
        <button class="tab">Munka2</button>
        <svg class="slant" viewBox="0 0 10 20" width="10" height="20"><path d="M9 0L0 20M2 15l3 5h5" stroke="#555" fill="none" /></svg>
        <button class="tab wide">AMDPM 14-3-2013 172748</button>
        <svg class="slant" viewBox="0 0 10 20" width="10" height="20"><path d="M9 0L0 20" stroke="#555" fill="none" /></svg>
        <div class="hscroll">
          <span class="vsplit"></span>
          <button aria-label="Balra"><span class="caret to-left"></span></button>
          <div class="track"><div class="hthumb"><span></span></div></div>
          <button aria-label="Jobbra"><span class="caret to-right"></span></button>
          <span class="vsplit"></span>
        </div>
        <span class="resize"></span>
      </div>
    </section>
  </main>

  <footer>
    <span class="ready">Kész</span>
    <span class="pane w34"></span>
    <span class="pane w130"></span>
    <span class="pane w28"></span>
    <span class="pane w34"></span>
    <span class="pane w30">NUM</span>
    <span class="pane w34"></span>
    <span class="pane w34"></span>
    <span class="pane w24"></span>
  </footer>
</div>

<style>
  :global(body) {
    margin: 0;
    overflow: hidden;
  }

  .screen {
    display: flex;
    flex-direction: column;
    height: 100vh;
    font-family: "Open Sans", "Noto Sans", sans-serif;
    font-size: 14px;
    color: #111;
    background: #f0f0f0;
  }

  button {
    display: flex;
    align-items: center;
    justify-content: center;
    padding: 0;
    border: 0;
    background: none;
    font: inherit;
    color: inherit;
  }

  input {
    box-sizing: border-box;
    min-width: 0;
    border: 0;
    outline: 0;
    font: inherit;
  }

  .caret {
    width: 0;
    height: 0;
    border: 5px solid transparent;
    border-top-color: #000;
    border-bottom: 0;
  }

  .caret.light {
    border-top-color: #fff;
  }

  .caret.dim {
    border-top-color: #7f93bb;
  }

  .caret.up {
    border: 5px solid transparent;
    border-bottom-color: #444;
    border-top: 0;
  }

  .caret.to-left {
    border: 5px solid transparent;
    border-right-color: #333;
    border-left: 0;
  }

  .caret.to-right {
    border: 5px solid transparent;
    border-left-color: #333;
    border-right: 0;
  }

  /* taskbar */
  .taskbar {
    display: flex;
    align-items: center;
    height: 47px;
    flex: none;
    background: linear-gradient(90deg, #484e53, #4f565d 45%, #555e68 68%, #3a424c 78%, #2f363e);
    border-bottom: 1px solid #11161a;
    box-sizing: border-box;
    color: #fff;
  }

  .start {
    width: 46px;
    margin: 0 14px 0 10px;
  }

  .grip {
    width: 12px;
    height: 40px;
    background: radial-gradient(circle, #16191c 1px, transparent 2px) 0 0 / 4px 7px;
  }

  .apps {
    display: flex;
    flex: 1;
    gap: 4px;
    margin-left: 9px;
  }

  .app {
    width: 66px;
    height: 46px;
    box-sizing: border-box;
  }

  .app.open {
    border: 1px solid #b9bec4;
    border-radius: 3px;
    background: linear-gradient(135deg, #8b9197, #6a7077 45%, #555c64 46%, #626971);
  }

  .app.active {
    border-color: #e4e6e8;
    background: linear-gradient(135deg, #c9ccce, #a0a4a8 45%, #8d9196 46%, #b8bbbe);
  }

  .lang {
    margin: 0 20px 0 9px;
  }

  .tray {
    display: flex;
    margin-left: 14px;
  }

  .tray-icon {
    display: flex;
    align-items: center;
    justify-content: center;
    width: 30px;
    height: 24px;
  }

  .tray-icon :global(svg) {
    max-width: 20px;
    max-height: 20px;
  }

  .clock {
    display: flex;
    flex-direction: column;
    align-items: center;
    width: 102px;
    line-height: 22px;
  }

  .desktop {
    width: 13px;
    height: 45px;
    margin: 0 1px 0 0;
    border: 1px solid #8a9299;
    background: linear-gradient(135deg, #6b7278, #2b3036);
  }

  /* window frame */
  .titlebar {
    display: flex;
    align-items: center;
    gap: 6px;
    height: 28px;
    flex: none;
    box-sizing: border-box;
    padding-left: 1px;
    border-top: 1px solid #7d868c;
    border-bottom: 1px solid #1c242b;
    background:
      radial-gradient(ellipse 30px 12px at 952px 18px, #a23c48, transparent),
      radial-gradient(ellipse 30px 12px at 750px 18px, #3f7364, transparent),
      radial-gradient(ellipse 40px 14px at 1045px 18px, #2f6880, transparent),
      radial-gradient(ellipse 40px 14px at 855px 14px, #6c8790, transparent),
      linear-gradient(90deg, #8f8f8c, #a5a5a2 100px, #9c9d9b 260px, #8e9090 370px, #4c4e52 420px, #20262d 490px, #2c3640 580px, #3b4853 800px, #44525e 1200px, #3a4a59 1500px, #4b5e70 1750px, #3b4b59);
  }

  .title {
    flex: 1;
  }

  .window-buttons {
    display: flex;
    align-self: flex-start;
    margin-right: 3px;
    border: 1px solid #c7ccd2;
    border-top: 0;
    border-radius: 0 0 5px 5px;
    overflow: hidden;
  }

  .win {
    width: 34px;
    height: 22px;
    border-right: 1px solid #c7ccd2;
    background: linear-gradient(#a6acb3, #7c848d 45%, #434c57 50%, #6b7581);
  }

  .win.close {
    width: 58px;
    border-right: 0;
    background: linear-gradient(#dd9a8c, #cc5c49 45%, #b12a15 50%, #d8593e);
  }

  .menubar {
    display: flex;
    align-items: center;
    height: 31px;
    flex: none;
    padding-right: 7px;
    background: linear-gradient(90deg, #9fbef7, #c3d8f9 720px);
  }

  .dots {
    width: 3px;
    height: 20px;
    margin: 0 6px 0 5px;
    background: radial-gradient(circle, #27418a 1px, transparent 2px) 0 0 / 3px 4px;
  }

  .menus {
    display: flex;
    flex: 1;
    gap: 16px;
    margin-left: 7px;
  }

  .menus button {
    display: block;
  }

  .combo {
    display: flex;
    height: 24px;
    border: 1px solid #fff;
    box-sizing: border-box;
    background: #fff;
  }

  .combo input {
    flex: 1;
    padding: 0 3px;
  }

  .drop {
    width: 15px;
    background: #c3d8f9;
  }

  .ask {
    width: 238px;
  }

  .ask input::placeholder {
    color: #8c8c8c;
  }

  .doc-buttons {
    display: flex;
    gap: 11px;
    margin-left: 6px;
  }

  .toolrow {
    display: flex;
    height: 31px;
    flex: none;
    padding-left: 2px;
    background: linear-gradient(90deg, #9fbef7, #c3d8f9 720px);
  }

  .toolbar {
    display: flex;
    align-items: center;
    border-radius: 4px;
    background: linear-gradient(#e0ebfe, #c5d9fb 45%, #84a9e9);
    overflow: hidden;
  }

  .toolbar .dots {
    margin: 0 3px;
  }

  .tool {
    width: 28px;
    height: 26px;
  }

  .tool :global(svg) {
    overflow: visible;
  }

  .sigma {
    width: 24px;
    font: bold 18px "Liberation Serif", serif;
  }

  .more {
    width: 15px;
    height: 26px;
  }

  .sep {
    width: 1px;
    height: 20px;
    margin: 0 2px;
    background: #6b8fd0;
    border-right: 1px solid #f3f7fe;
  }

  .zoom {
    width: 92px;
    margin-left: 2px;
  }

  .cap {
    width: 14px;
    height: 31px;
    margin-left: 2px;
    align-items: flex-end;
    background: linear-gradient(#6f9ae4, #0a3a9a);
  }

  .cap .caret {
    margin-bottom: 3px;
  }

  .formula {
    display: flex;
    height: 24px;
    flex: none;
    box-sizing: border-box;
    border-top: 1px solid #5174b5;
    border-bottom: 2px solid #fff;
    background: #9fbef7;
  }

  .name {
    width: 148px;
    margin-left: 2px;
    text-align: center;
    font: 16px "Liberation Sans", sans-serif;
  }

  .name-drop {
    width: 22px;
  }

  .fx {
    width: 72px;
    padding-left: 48px;
    box-sizing: border-box;
    font: italic bold 14px "Liberation Serif", serif;
  }

  .cell-value {
    flex: 1;
  }

  /* workspace */
  main {
    display: flex;
    flex: 1;
    min-height: 0;
  }

  aside {
    width: 44px;
    flex: none;
    border-right: 2px solid #56729f;
    background: #9fbef7;
  }

  .side {
    display: flex;
    flex-direction: column;
    padding-top: 3px;
    border-radius: 4px;
    background: linear-gradient(90deg, #d3e2fc, #c0d5fa 50%, #7ba1e4);
    overflow: hidden;
  }

  .dots-h {
    height: 3px;
    margin: 2px 5px;
    background: radial-gradient(circle, #27418a 1px, transparent 2px) 0 0 / 4px 3px;
  }

  .side-row {
    display: flex;
    align-items: center;
    justify-content: center;
    height: 27px;
  }

  .side-row .more {
    width: 14px;
  }

  .side-0,
  .side-1,
  .side-2 {
    font: bold 17px "Liberation Serif", serif;
  }

  .side-1 {
    font-style: italic;
  }

  .side-2 {
    text-decoration: underline;
    font-size: 16px;
  }

  .sep-h {
    height: 1px;
    margin: 2px 8px 3px;
    background: #f3f7fe;
  }

  .cap-h {
    height: 14px;
    margin-top: 4px;
    padding-right: 2px;
    justify-content: flex-end;
    background: linear-gradient(90deg, #4a7bd2, #0a3080);
  }

  .book {
    display: flex;
    flex-direction: column;
    flex: 1;
    min-width: 0;
  }

  .view {
    display: flex;
    flex: 1;
    min-height: 0;
  }

  .sheet {
    position: relative;
    flex: 1;
    overflow: hidden;
    background: #fff;
    border-bottom: 1px solid #808080;
  }

  table {
    width: 1856px;
    table-layout: fixed;
    border-spacing: 0;
    font: 9px "Liberation Sans", sans-serif;
  }

  th,
  td {
    box-sizing: border-box;
    width: 40px;
    height: 11px;
    padding: 0;
    border-right: 1px solid #b8b8b8;
    border-bottom: 1px solid #b8b8b8;
    line-height: 10px;
  }

  th {
    border-color: #77776a;
    background: #ece9d8;
    font-weight: normal;
  }

  thead th {
    height: 12px;
    border-top: 1px solid #77776a;
  }

  .corner,
  tbody th {
    width: 16px;
  }

  .selected {
    background: #fbbd72;
  }

  .chart {
    position: absolute;
    top: 159px;
    left: 20px;
    width: calc(100% - 27px);
    box-sizing: border-box;
    margin: 0;
    padding-bottom: 5px;
    border: 1px solid #000;
    background: #fff;
    font: 19px "Liberation Sans", sans-serif;
    color: #000;
  }

  .chart svg {
    display: block;
    width: 100%;
  }

  figcaption {
    display: flex;
    justify-content: center;
    padding: 8px 8px 0 58px;
  }

  ul {
    display: flex;
    gap: 9px;
    margin: 0;
    padding: 0 1px 0 4px;
    border: 1px solid #000;
    list-style: none;
    line-height: 27px;
    white-space: nowrap;
  }

  li {
    display: flex;
    align-items: center;
    gap: 5px;
  }

  .key {
    width: 16px;
    height: 1px;
  }

  li:last-child .key {
    height: 2px;
  }

  .vscroll {
    display: flex;
    flex-direction: column;
    width: 18px;
    flex: none;
    padding: 0 2px 0 1px;
    background: #f0f0f0;
  }

  .split {
    height: 8px;
    border: 1px solid #999;
    border-bottom: 2px solid #000;
    background: #f4f4f4;
  }

  .vscroll button {
    height: 21px;
  }

  .thumb {
    display: flex;
    align-items: center;
    justify-content: center;
    flex: 1;
    margin-bottom: 22px;
    border: 1px solid #979797;
    border-radius: 2px;
    background: linear-gradient(90deg, #f3f3f3, #e2e2e4 45%, #cfcfd3 50%, #bdbdc2);
  }

  .thumb span {
    width: 9px;
    height: 10px;
    background: repeating-linear-gradient(#555 0 1px, #eee 1px 2px, transparent 2px 4px);
  }

  .tabs {
    display: flex;
    height: 20px;
    flex: none;
    padding-bottom: 2px;
    font-family: "Noto Sans", "Open Sans", sans-serif;
  }

  .tab-nav {
    display: flex;
    width: 81px;
    justify-content: space-around;
    border-right: 1px solid #999;
  }

  .tab {
    padding: 0 4px;
    border-bottom: 1px solid #777;
  }

  .current {
    padding: 0 2px;
    background: #fff;
    font-weight: bold;
  }

  .wide {
    padding: 0 20px;
  }

  .hscroll {
    display: flex;
    width: 740px;
    margin-left: auto;
  }

  .vsplit {
    width: 5px;
    border: 1px solid #bbb;
    border-right: 2px solid #000;
    background: #f4f4f4;
  }

  .hscroll button {
    width: 20px;
  }

  .track {
    flex: 1;
    padding: 0 30px 0 4px;
  }

  .hthumb {
    display: flex;
    align-items: center;
    justify-content: center;
    height: 18px;
    border: 1px solid #979797;
    border-radius: 2px;
    background: linear-gradient(#f3f3f3, #e2e2e4 45%, #cfcfd3 50%, #bdbdc2);
  }

  .hthumb span {
    width: 10px;
    height: 9px;
    background: repeating-linear-gradient(90deg, #555 0 1px, #eee 1px 2px, transparent 2px 4px);
  }

  .resize {
    width: 22px;
    background: radial-gradient(circle, #999 1px, transparent 2px) right bottom / 4px 4px no-repeat;
  }

  footer {
    display: flex;
    align-items: center;
    gap: 2px;
    height: 24px;
    flex: none;
    padding-right: 5px;
    border-top: 1px solid #fff;
    box-sizing: border-box;
    font-size: 13px;
  }

  .ready {
    flex: 1;
    padding-left: 7px;
  }

  .pane {
    height: 20px;
    box-sizing: border-box;
    border: 1px solid #cfcfcf;
    text-align: center;
    line-height: 18px;
    font-size: 12px;
  }

  .w24 {
    width: 24px;
  }

  .w28 {
    width: 28px;
  }

  .w30 {
    width: 30px;
  }

  .w34 {
    width: 34px;
  }

  .w130 {
    width: 130px;
  }
</style>
